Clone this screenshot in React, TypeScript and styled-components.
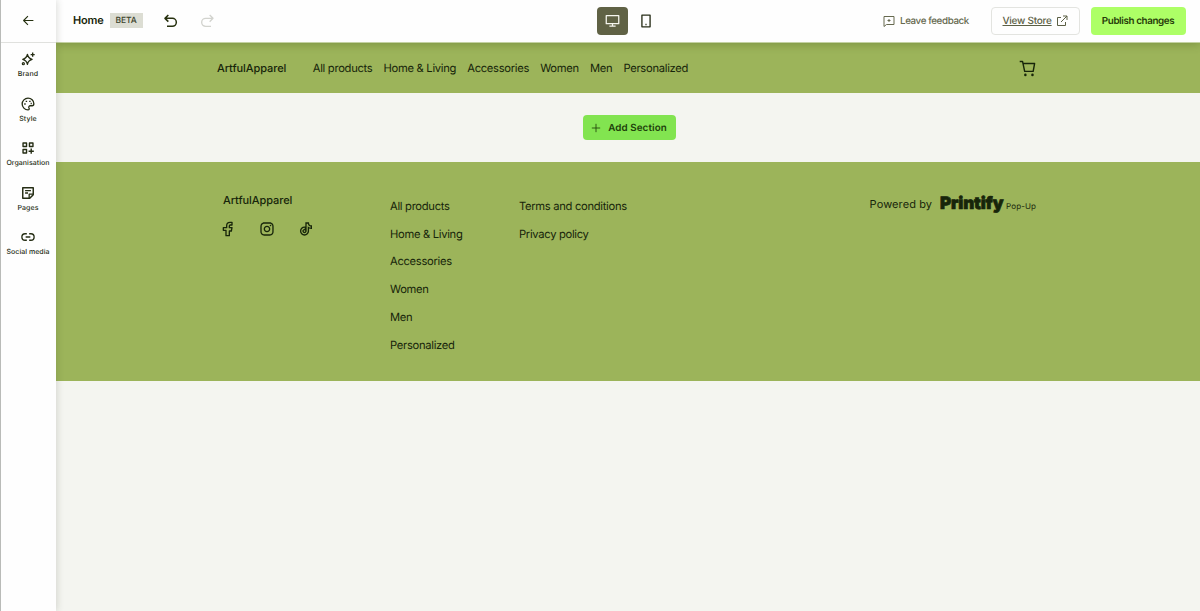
import React from "react";
import styled, { createGlobalStyle } from "styled-components";
import { RiInstagramLine, RiTiktokLine } from "react-icons/ri";

const Global = createGlobalStyle`
  * { box-sizing: border-box; }
  body { margin: 0; background: #f4f5f0; font-family: Inter, "Liberation Sans", sans-serif; color: #17250a; text-rendering: geometricPrecision; }
  button { text-rendering: inherit; }
`;

const Shell = styled.div`
  display: grid;
  grid-template-columns: 56px 1fr;
  height: 611px;
  overflow: hidden;
`;

const Sidebar = styled.aside`
  display: flex;
  flex-direction: column;
  background: #fefefe;
  border-left: 1px solid #b9bbb8;
  box-shadow: 1px 0 7px rgba(40, 45, 25, 0.16);
  z-index: 2;
`;

const Back = styled.div`
  height: 43px;
  border-bottom: 1px solid #e0e1de;
  display: flex;
  justify-content: center;
  padding-top: 14px;
  color: #25300f;
`;

const SideItem = styled.div`
  height: 44.5px;
  padding: 9px 1px 0 0;
  display: flex;
  flex-direction: column;
  align-items: center;
  color: #252d14;
`;

const SideLabel = styled.span<{ $spacing?: number }>`
  margin-top: 3px;
  font-size: 7px;
  line-height: 9px;
  font-weight: 500;
  white-space: nowrap;
  letter-spacing: ${(p) => p.$spacing ?? 0.1}px;
`;

const Main = styled.div`
  display: flex;
  flex-direction: column;
  min-width: 0;
`;

const Header = styled.header`
  height: 43px;
  display: grid;
  grid-template-columns: 541px 1fr auto;
  align-items: center;
  padding: 1px 14.5px 1px 0;
  background: #fefefe;
  border-bottom: 1px solid #c4d2a3;
  box-shadow: 0 1px 9px rgba(45, 65, 10, 0.3);
  z-index: 1;
`;

const Group = styled.div`
  display: flex;
  align-items: center;
`;

const Title = styled.span`
  margin-left: 17px;
  width: 36.5px;
  padding-bottom: 1.5px;
  font-size: 11px;
  font-weight: 600;
  letter-spacing: -0.15px;
`;

const Badge = styled.span`
  width: 33px;
  height: 15px;
  margin: 0 20px 1px 0;
  background: #dcddd3;
  font-size: 8.5px;
  line-height: 16px;
  font-weight: 500;
  text-align: center;
  letter-spacing: -0.1px;
  color: #3c432c;
`;

const History = styled.span<{ $disabled?: boolean }>`
  display: flex;
  width: 36px;
  margin-bottom: 1px;
  color: ${(p) => (p.$disabled ? "#d2d3ce" : "#27310f")};
`;

const Device = styled.span<{ $active?: boolean }>`
  width: 31px;
  height: 28px;
  margin-right: 2px;
  padding-bottom: 1px;
  border-radius: 4px;
  display: flex;
  align-items: center;
  justify-content: center;
  background: ${(p) => (p.$active ? "#606245" : "transparent")};
  color: ${(p) => (p.$active ? "#f6f6ef" : "#282e18")};
`;

const Feedback = styled.span`
  display: flex;
  align-items: center;
  gap: 5.5px;
  width: 108px;
  font-size: 9.8px;
  font-weight: 500;
  white-space: nowrap;
  letter-spacing: -0.4px;
  color: #66694f;
`;

const ViewStore = styled.button`
  display: flex;
  align-items: center;
  justify-content: space-between;
  width: 89px;
  height: 28px;
  padding: 0 11px;
  margin-right: 11px;
  background: transparent;
  border: 1px solid #e3e4e0;
  border-radius: 4px;
  font: 500 10px Inter, sans-serif;
  letter-spacing: -0.25px;
  color: #5c6045;
  white-space: nowrap;
  span { text-decoration: underline; text-underline-offset: 1px; }
`;

const Publish = styled.button`
  width: 95px;
  height: 28px;
  padding: 0;
  border: 0;
  border-radius: 4px;
  background: #adff66;
  font: 600 9.8px Inter, sans-serif;
  letter-spacing: -0.38px;
  color: #263b09;
  white-space: nowrap;
`;

const StoreNav = styled.nav`
  height: 50px;
  display: flex;
  align-items: center;
  padding: 0 164.5px 0 161px;
  background: #9cb45a;
`;

const Brand = styled.strong`
  font-size: 11px;
  font-weight: 500;
  line-height: 14px;
  letter-spacing: -0.08px;
`;

const NavLinks = styled.div`
  display: flex;
  gap: 11.1px;
  margin-left: 26.5px;
  flex: 1;
  white-space: nowrap;
  font-size: 11.2px;
  letter-spacing: -0.29px;
`;

const AddArea = styled.section`
  height: 69px;
  display: flex;
  justify-content: center;
  align-items: center;
`;

const AddButton = styled.button`
  display: flex;
  align-items: center;
  justify-content: center;
  gap: 7px;
  width: 93px;
  height: 25px;
  margin-left: 2px;
  padding: 0;
  border: 0;
  border-radius: 4px;
  background: #82e450;
  font: 600 9.8px/13px Inter, sans-serif;
  letter-spacing: 0.1px;
  color: #20400b;
  white-space: nowrap;
  span { padding-top: 1px; }
`;

const Footer = styled.footer`
  height: 218.5px;
  display: grid;
  grid-template-columns: 167px 129px 1fr auto;
  padding: 31px 164px 0 167px;
  background: #9cb45a;
  font-size: 11px;
`;

const Socials = styled.div`
  display: flex;
  gap: 23px;
  margin: 14px 0 0 -2.6px;
`;

const Links = styled.div`
  display: flex;
  flex-direction: column;
  gap: 13.8px;
  padding-top: 5.8px;
  font-size: 11.2px;
  line-height: 14px;
  letter-spacing: -0.3px;
  white-space: nowrap;
`;

const Powered = styled.div`
  display: flex;
  align-items: baseline;
  height: 22px;
  padding-top: 3px;
  font-size: 11px;
  line-height: 14px;
  letter-spacing: 0.1px;
  white-space: nowrap;
`;

const Wordmark = styled.span`
  margin-left: 8px;
  width: 66px;
  font-size: 17px;
  font-weight: 900;
  line-height: 14px;
  letter-spacing: -0.15px;
  -webkit-text-stroke: 0.7px #17250a;
  transform: translateY(1px);
`;

const PopUp = styled.span`
  font-size: 8px;
  letter-spacing: 0.1px;
  transform: translateY(0.5px);
`;

const Icon = ({ size = 14, stroke = 2, children }: { size?: number; stroke?: number; children: React.ReactNode }) => (
  <svg width={size} height={size} viewBox="0 0 24 24" fill="none" stroke="currentColor" strokeWidth={stroke} strokeLinejoin="round">
    {children}
  </svg>
);

const sideItems = [
  { label: "Brand", spacing: 0.1, art: <><path d="M11 4c1 5 2.500 7 8 8.500-5.500 1.500-7 3.500-8 8.500-1-5-2.500-7-8-8.500C8.500 11 10 9 11 4Z" strokeWidth="2.300" /><path d="M20 1v7M16.500 4.500h7" strokeWidth="2.300" /><circle cx="4" cy="20" r="1.800" /></> },
  { label: "Style", spacing: 0.1, art: <><path d="M12 2a10 10 0 1 0 0 20c2 0 2.700-1.500 1.700-3.200-1-1.800.1-3.800 2.300-3.800h3c2 0 3-1 3-3.500C22 6 17.500 2 12 2Z" strokeWidth="2.300" /><path d="M5.500 12h2.500M8 7.500h2.500M14 7.500h2.500M16.500 11h2" strokeWidth="2.500" /></> },
  { label: "Organisation", spacing: 0.05, art: <path d="M3.500 3.500h6v6h-6ZM14.500 3.500h6v6h-6ZM3.500 14.500h6v6h-6ZM17.500 13v9M13 17.500h9" strokeWidth="2.400" /> },
  { label: "Pages", spacing: 0.05, art: <><path d="M3 3h18v12l-6 6H3Z" strokeWidth="2.500" /><path d="M14 21v-7h7M7 8h10M7 12h5" strokeWidth="2.200" /></> },
  { label: "Social media", spacing: 0.03, art: <path d="M10 6.500H7a5.500 5.500 0 0 0 0 11h3M14 6.500h3a5.500 5.500 0 0 1 0 11h-3M8 12h8" strokeWidth="2.300" /> },
];

const categories = ["All products", "Home & Living", "Accessories", "Women", "Men", "Personalized"];

export default function App() {
  return (
    <>
      <Global />
      <Shell>
        <Sidebar>
          <Back><Icon size={13}><path d="M21 12H4M11 4l-8 8 8 8" /></Icon></Back>
          {sideItems.map((item) => (
            <SideItem key={item.label}>
              <Icon>{item.art}</Icon>
              <SideLabel $spacing={item.spacing}>{item.label}</SideLabel>
            </SideItem>
          ))}
        </Sidebar>
        <Main>
          <Header>
            <Group>
              <Title>Home</Title>
              <Badge>BETA</Badge>
              <History><Icon size={16}><path d="M8 3 3 8l5 5M3 8h11a6 6 0 0 1 0 12H6" strokeWidth="2.300" /></Icon></History>
              <History $disabled><Icon size={16}><path d="m16 3 5 5-5 5M21 8H10a6 6 0 0 0 0 12h8" /></Icon></History>
            </Group>
            <Group>
              <Device $active><Icon size={15}><path d="M2 4h20v13H2ZM12 17v4M7 21h10" /></Icon></Device>
              <Device><Icon size={14}><path d="M5 2h14v20H5ZM11 18h2" strokeWidth="2.300" /></Icon></Device>
            </Group>
            <Group>
              <Feedback><Icon size={12}><path d="M2 3h20v16H7l-5 4ZM12 8v6M9 11h6" /></Icon>Leave feedback</Feedback>
              <ViewStore><span>View Store</span><Icon size={12}><path d="M10 5H3v16h16v-7M14 2h8v8M22 2 10 14" /></Icon></ViewStore>
              <Publish>Publish changes</Publish>
            </Group>
          </Header>
          <StoreNav>
            <Brand>ArtfulApparel</Brand>
            <NavLinks>{categories.map((name) => <span key={name}>{name}</span>)}</NavLinks>
            <Icon size={17}><path d="M1 2h4l3 14h12l2-11H6" /><circle cx="9" cy="21" r="1.800" fill="currentColor" stroke="none" /><circle cx="19" cy="21" r="1.800" fill="currentColor" stroke="none" /></Icon>
          </StoreNav>
          <AddArea>
            <AddButton><Icon size={10}><path d="M12 2v20M2 12h20" /></Icon><span>Add Section</span></AddButton>
          </AddArea>
          <Footer>
            <div>
              <Brand>ArtfulApparel</Brand>
              <Socials>
                <Icon size={16}><path d="M18 2h-3c-3.500 0-5 2-5 5v3H5v4h4v8h5v-7h3l1-5h-4V7.500c0-1 .5-1.500 1.500-1.500H18Z" /></Icon>
                <RiInstagramLine size={16} /><RiTiktokLine size={16} />
              </Socials>
            </div>
            <Links>{categories.map((name) => <span key={name}>{name}</span>)}</Links>
            <Links><span>Terms and conditions</span><span>Privacy policy</span></Links>
            <Powered>Powered by<Wordmark>Printify</Wordmark><PopUp>Pop-Up</PopUp></Powered>
          </Footer>
        </Main>
      </Shell>
    </>
  );
}
